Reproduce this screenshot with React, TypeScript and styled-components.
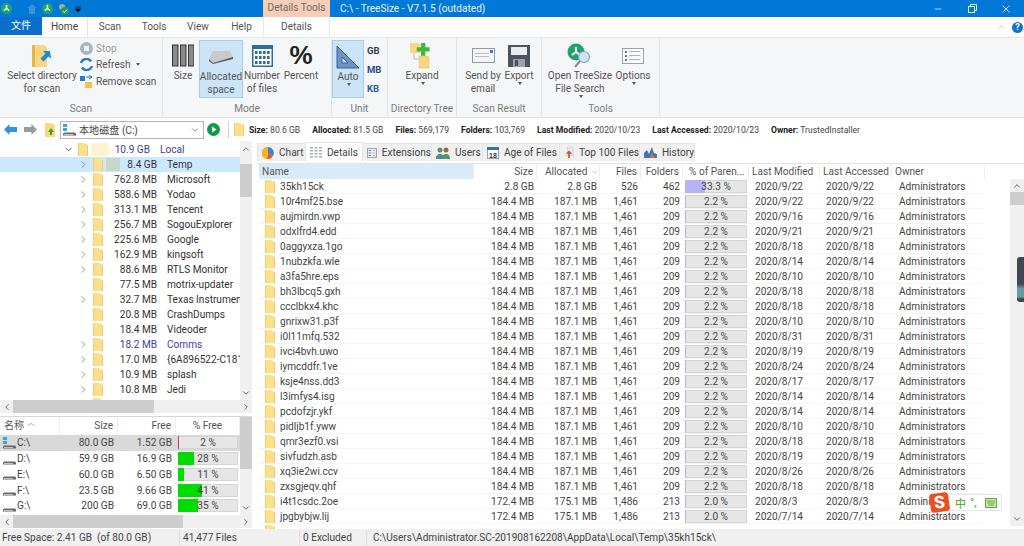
import React from 'react';
import styled, { createGlobalStyle } from 'styled-components';
import { ChevronDown, ChevronRight, ChevronLeft, ChevronUp, Minus, X } from 'lucide-react';

const Global = createGlobalStyle`
  html, body { margin: 0; padding: 0; height: 100%; overflow: hidden; background: #fff; }
  body { font-family: Roboto, "Noto Sans CJK SC", sans-serif; font-size: 10.1px; color: #2b2b2b; }
`;

const Win = styled.div`
  position: relative;
  width: 1024px;
  height: 546px;
  display: flex;
  flex-direction: column;
  overflow: hidden;
`;

/* title bar */
const TitleBar = styled.div`
  height: 17px;
  background: #0078d7;
  display: flex;
  align-items: center;
  color: #fff;
`;
const Qat = styled.div`
  width: 263px;
  display: flex;
  align-items: center;
  gap: 5px;
  padding-left: 1px;
  box-sizing: border-box;
`;
const ToolsTitle = styled.div`
  width: 67px;
  height: 17px;
  line-height: 16px;
  text-align: center;
  background: #f6cdb6;
  color: #6b6b6b;
`;
const TitleText = styled.div`
  margin-left: 10px;
  flex: 1;
  color: #e8f2fb;
`;
const WinButtons = styled.div`
  display: flex;
  align-items: center;
  padding-right: 1px;
  color: #d5e8f8;
`;
const WinBtn = styled.div`
  width: 34px;
  display: flex;
  justify-content: center;
`;

/* ribbon tabs */
const TabRow = styled.div`
  height: 20px;
  display: flex;
  background: #fff;
  align-items: flex-start;
`;
const FileTab = styled.div`
  width: 42px;
  height: 18px;
  background: #0a6fca;
  color: #fff;
  text-align: center;
  line-height: 17px;
`;
const RibbonTab = styled.div<{ $w: number; $active?: boolean; $ctx?: boolean }>`
  width: ${p => p.$w}px;
  height: 20px;
  text-align: center;
  line-height: 19px;
  color: #555;
  box-sizing: border-box;
  ${p => p.$active && 'color:#444; border-right:1px solid #e3e3e3;'}
  ${p => p.$ctx && 'border-left:1px solid #e6e6e6; border-right:1px solid #e6e6e6;'}
`;
const TabFill = styled.div`
  flex: 1;
  height: 20px;
  display: flex;
  justify-content: flex-end;
  align-items: center;
  gap: 6px;
  padding-right: 1px;
  color: #bbb;
`;
const HelpDot = styled.div`
  width: 11px;
  height: 11px;
  border-radius: 50%;
  background: #1173c9;
  color: #fff;
  font-size: 9px;
  font-weight: 700;
  line-height: 11px;
  text-align: center;
`;

/* ribbon */
const Ribbon = styled.div`
  height: 81px;
  background: #f5f6f7;
  border-top: 1px solid #e6e6e6;
  border-bottom: 1px solid #e2e2e2;
  box-sizing: border-box;
  display: flex;
`;
const Group = styled.div<{ $w: number }>`
  width: ${p => p.$w}px;
  border-right: 1px solid #e1e3e6;
  box-sizing: border-box;
  display: flex;
  flex-direction: column;
  padding-top: 2px;
`;
const GroupBody = styled.div<{ $pad?: number }>`
  flex: 1;
  display: flex;
  align-items: flex-start;
  padding-left: ${p => p.$pad || 0}px;
`;
const GroupLabel = styled.div`
  height: 16px;
  line-height: 15px;
  text-align: center;
  color: #7b7b7b;
  white-space: nowrap;
`;
const BigBtn = styled.div<{ $w: number; $on?: boolean }>`
  width: ${p => p.$w}px;
  height: 58px;
  box-sizing: border-box;
  display: flex;
  flex-direction: column;
  align-items: center;
  text-align: center;
  line-height: 13px;
  color: #555;
  white-space: nowrap;
  ${p => p.$on && 'background:#cce4f7; border:1px solid #a6cdea;'}
`;
const BigIcon = styled.div`
  height: 27px;
  margin-top: 2px;
  display: flex;
  align-items: center;
  justify-content: center;
`;
const PercentGlyph = styled.span`
  font-family: "Liberation Sans", sans-serif;
  font-size: 26px;
  font-weight: 700;
  color: #222;
`;
const SmallCol = styled.div`
  display: flex;
  flex-direction: column;
  gap: 2.5px;
  padding-top: 1px;
`;
const SmallBtn = styled.div<{ $off?: boolean }>`
  height: 14px;
  display: flex;
  align-items: center;
  gap: 3px;
  color: ${p => (p.$off ? '#9a9a9a' : '#555')};
  white-space: nowrap;
`;
const UnitCol = styled.div`
  display: flex;
  flex-direction: column;
  gap: 6px;
  padding: 4px 0 0 3px;
  font-weight: 700;
  font-size: 9.5px;
`;
const UnitLabel = styled.div<{ $c: string }>`
  height: 13px;
  line-height: 13px;
  color: ${p => p.$c};
`;
const Caret = styled.span`
  display: inline-block;
  border-left: 2.5px solid transparent;
  border-right: 2.5px solid transparent;
  border-top: 3px solid #555;
  vertical-align: middle;
  margin-left: 2px;
`;

/* info bar */
const InfoBar = styled.div`
  height: 23px;
  display: flex;
  align-items: center;
  background: #fff;
`;
const NavIcon = styled.div<{ $w: number }>`
  width: ${p => p.$w}px;
  display: flex;
  justify-content: center;
`;
const Combo = styled.div`
  width: 144px;
  height: 18px;
  box-sizing: border-box;
  border: 1px solid #b5b5b5;
  display: flex;
  align-items: center;
  gap: 3px;
  padding: 0 3px 0 2px;
  color: #444;
`;
const ComboText = styled.span`
  flex: 1;
`;
const Divider = styled.div`
  width: 1px;
  height: 17px;
  background: #ccc;
  margin: 0 5px 0 6px;
`;
const Facts = styled.div`
  display: flex;
  gap: 12px;
  margin-left: 5px;
  font-size: 8.6px;
  color: #444;
  white-space: nowrap;
`;
const Fact = styled.b`
  color: #222;
`;

/* main */
const Main = styled.div`
  height: 388px;
  display: flex;
`;
const LeftPane = styled.div`
  width: 252px;
  display: flex;
  flex-direction: column;
`;
const TreeArea = styled.div`
  height: 259px;
  display: flex;
`;
const TreeList = styled.div`
  flex: 1;
  padding-top: 1px;
  overflow: hidden;
  min-width: 0;
`;
const TreeRow = styled.div<{ $sel?: boolean; $indent: number }>`
  height: 15px;
  display: flex;
  align-items: center;
  padding-left: ${p => p.$indent}px;
  background: ${p => (p.$sel ? '#cce8ff' : 'transparent')};
  white-space: nowrap;
  overflow: hidden;
  & > * { flex: none; }
`;
const Twisty = styled.div`
  width: 12px;
  height: 11px;
  display: flex;
  justify-content: center;
  color: #888;
`;
const TreeIcon = styled.div`
  margin-left: 4px;
  display: flex;
`;
const SizeBox = styled.div<{ $w: number; $blue?: boolean }>`
  position: relative;
  width: ${p => p.$w}px;
  margin-left: 3px;
  text-align: right;
  color: ${p => (p.$blue ? '#3f3f9e' : '#333')};
`;
const SizeFill = styled.div<{ $w: number; $c: string }>`
  position: absolute;
  left: 0;
  top: -1px;
  bottom: -1px;
  width: ${p => p.$w}px;
  background: ${p => p.$c};
`;
const SizeText = styled.span`
  position: relative;
`;
const TreeName = styled.div<{ $blue?: boolean }>`
  margin-left: 10px;
  color: ${p => (p.$blue ? '#3f3f9e' : '#333')};
`;
const VBar = styled.div<{ $w?: number; $top?: number; $bottom?: number }>`
  width: ${p => p.$w || 12}px;
  margin-top: ${p => p.$top || 0}px;
  margin-bottom: ${p => p.$bottom || 0}px;
  background: #f0f0f0;
  display: flex;
  flex-direction: column;
  align-items: center;
  color: #555;
  flex: none;
`;
const VArrow = styled.div<{ $h?: number }>`
  height: ${p => p.$h || 15}px;
  flex: none;
  display: flex;
  align-items: center;
  justify-content: center;
`;
const VThumb = styled.div<{ $top: number; $h: number }>`
  width: 100%;
  flex: none;
  height: ${p => p.$h}px;
  margin-top: ${p => p.$top}px;
  background: #cdcdcd;
`;
const VSpace = styled.div`
  flex: 1;
`;
const HBar = styled.div`
  height: 13px;
  flex: none;
  background: #f0f0f0;
  display: flex;
  align-items: center;
  color: #555;
`;
const HArrow = styled.div`
  width: 13px;
  flex: none;
  display: flex;
  justify-content: center;
`;
const HThumb = styled.div<{ $w: number }>`
  width: ${p => p.$w}px;
  height: 100%;
  background: #cdcdcd;
`;
const DriveArea = styled.div`
  margin-top: 3px;
  border-top: 1px solid #d8d8d8;
  height: 98px;
  display: flex;
  flex: none;
`;
const DriveList = styled.div`
  flex: 1;
  overflow: hidden;
`;
const DriveHead = styled.div`
  height: 18px;
  display: grid;
  grid-template-columns: 60px 58px 58px 64px;
  align-items: center;
  color: #555;
`;
const DriveHeadCell = styled.div<{ $align?: string }>`
  height: 100%;
  line-height: 18px;
  padding: 0 4px;
  box-sizing: border-box;
  text-align: ${p => p.$align || 'left'};
  border-right: 1px solid #eee;
  position: relative;
`;
const SortTick = styled.span`
  position: absolute;
  left: 27px;
  top: -3px;
  color: #999;
  font-size: 8px;
`;
const DriveRow = styled.div<{ $sel?: boolean }>`
  height: 15.75px;
  display: grid;
  grid-template-columns: 60px 58px 58px 64px;
  align-items: center;
  background: ${p => (p.$sel ? '#d9d9d9' : 'transparent')};
  color: #444;
`;
const DriveName = styled.div`
  display: flex;
  align-items: center;
  gap: 1px;
  padding-left: 3px;
`;
const DriveNum = styled.div`
  text-align: right;
  padding-right: 4px;
`;
const Bar = styled.div`
  position: relative;
  height: 13px;
  margin: 0 2px;
  box-sizing: border-box;
  background: #e6e6e6;
  border: 1px solid #d4d4d4;
  text-align: center;
  line-height: 11px;
  color: #444;
`;
const BarFill = styled.div<{ $c: string }>`
  position: absolute;
  left: -1px;
  top: -1px;
  bottom: -1px;
  background: ${p => p.$c};
`;
const BarText = styled.span`
  position: relative;
`;

const Splitter = styled.div`
  width: 5px;
  flex: none;
`;

/* right */
const RightPane = styled.div`
  flex: 1;
  display: flex;
  flex-direction: column;
  min-width: 0;
`;
const DetailTabs = styled.div`
  height: 22px;
  padding-top: 2px;
  box-sizing: border-box;
  display: flex;
  align-items: flex-start;
`;
const DetailTab = styled.div<{ $w: number; $active?: boolean }>`
  width: ${p => p.$w}px;
  height: ${p => (p.$active ? 20 : 18)}px;
  box-sizing: border-box;
  display: flex;
  align-items: center;
  gap: 5px;
  padding-left: 4px;
  white-space: nowrap;
  color: #444;
  background: ${p => (p.$active ? '#fff' : '#f0f0f0')};
  border: 1px solid #e4e4e4;
  border-bottom: none;
  margin-right: -1px;
  ${p => p.$active && 'position:relative; top:-1px;'}
`;
const TableWrap = styled.div`
  flex: 1;
  display: flex;
  border-top: 1px solid #e4e4e4;
  min-height: 0;
`;
const Table = styled.div`
  flex: 1;
  padding-left: 2px;
  overflow: hidden;
  min-width: 0;
`;
const COLS = '215px 63px 63px 41px 42px 66px 71px 72px 93px';
const HeadRow = styled.div`
  height: 15px;
  display: grid;
  grid-template-columns: ${COLS};
  color: #555;
`;
const HeadCell = styled.div<{ $align?: string; $hi?: boolean; $pad?: number }>`
  display: block;
  line-height: 15px;
  padding: 0 3px 0 ${p => p.$pad || 3}px;
  box-sizing: border-box;
  white-space: nowrap;
  overflow: hidden;
  text-align: ${p => p.$align || 'left'};
  background: ${p => (p.$hi ? '#d9ebf9' : 'transparent')};
  border-right: 1px solid #eee;
`;
const SortChevron = styled(ChevronDown)`
  width: 8px;
  height: 8px;
  color: #aaa;
  margin-left: 4px;
  vertical-align: -1px;
`;
const DataRow = styled.div`
  height: 15px;
  display: grid;
  grid-template-columns: ${COLS};
  align-items: center;
  box-shadow: inset 0 -1px 0 #f4f4f4;
  width: 726px;
  color: #444;
`;
const NameCell = styled.div`
  display: flex;
  align-items: center;
  gap: 5px;
  padding-left: 6px;
`;
const NumCell = styled.div`
  text-align: right;
  padding-right: 3px;
`;
const DateCell = styled.div`
  padding-left: 6px;
  white-space: nowrap;
`;
const OwnerCell = styled.div`
  padding-left: 7px;
`;

/* status */
const StatusBar = styled.div`
  flex: 1;
  background: #f0f0f0;
  display: flex;
  align-items: center;
  color: #444;
  white-space: nowrap;
`;
const StatusCell = styled.div<{ $w: number; $pad: number; $last?: boolean }>`
  width: ${p => p.$w}px;
  flex: none;
  box-sizing: border-box;
  padding-left: ${p => p.$pad}px;
  border-right: ${p => (p.$last ? 'none' : '1px solid #dcdcdc')};
  line-height: 15px;
`;

/* overlays */
const SideHandle = styled.div`
  position: absolute;
  left: 1017px;
  top: 257px;
  width: 7px;
  height: 45px;
  border-radius: 3px 0 0 3px;
  background: linear-gradient(#3f4654 0 60%, #5f9f9a 70% 88%, #3f4654 94%);
`;
const Ime = styled.div`
  position: absolute;
  left: 930px;
  top: 493px;
  width: 72px;
  height: 19px;
  display: flex;
  align-items: center;
`;
const ImeBody = styled.div`
  margin-left: 16px;
  flex: 1;
  height: 17px;
  background: #fff;
  border: 1px solid #e5e5e5;
  box-sizing: border-box;
  display: flex;
  align-items: center;
  padding-left: 8px;
  color: #62a83a;
  font-weight: 500;
  font-size: 11px;
`;
const ImeDots = styled.span`
  margin-left: 4px;
  width: 15px;
`;
const ImeLogo = styled.div`
  position: absolute;
  left: 0;
  top: 0;
  width: 19px;
  height: 19px;
  border-radius: 3px;
  background: #e8501f;
  color: #fff;
  font-weight: 900;
  font-size: 17px;
  line-height: 18px;
  text-align: center;
  transform: rotate(-8deg);
`;

/* drawings */
const Folder = ({ w = 10, h = 13 }: { w?: number; h?: number }) => (
  <svg width={w} height={h} viewBox="0 0 10 13" style={{ flex: 'none' }}>
    <path d="M0 0h6l4 2v11H0z" fill="#fbdf8c" />
    <path d="M0 0h1v13H0z" fill="#f0cc6c" />
    <path d="M9 2l1 0v11H9z" fill="#f4ca68" />
  </svg>
);
const Drive = ({ win }: { win?: boolean }) => (
  <svg width="13" height="12" viewBox="0 0 13 12" style={{ flex: 'none' }}>
    {win && <path d="M0 0h4v3H0zM0 4h4v3H0z" fill="#3aa0e0" />}
    <path d="M1 8.5h11l1 1v2H0v-2z" fill="#666" />
    <path d="M1 10h9v.8H1z" fill="#ddd" />
  </svg>
);
const BigFolderIcon = () => (
  <svg width="22" height="26" viewBox="0 0 22 26">
    <path d="M1 2h12l3 2v20H1z" fill="#f7d581" />
    <path d="M1 2h3v22H1z" fill="#e5b54c" />
    <path d="M15 6h-7l2.5 2.5-5 5 3 3 5-5L16 14z" fill="#1c8ad6" transform="translate(4 2)" />
  </svg>
);
const ColumnsIcon = () => (
  <svg width="22" height="24" viewBox="0 0 22 24">
    {[0, 8, 16].map(x => (
      <rect key={x} x={x + 0.5} y="1" width="5.5" height="21" fill="#8b8b8b" stroke="#333" strokeWidth="1" />
    ))}
  </svg>
);
const DiskIcon = () => (
  <svg width="24" height="14" viewBox="0 0 24 14">
    <path d="M4 1h17l3 6-20 6-4-4z" fill="#c9c9c9" />
    <path d="M0 9l4 4 20-6v2L4 14 0 11z" fill="#555" />
  </svg>
);
const GridIcon = () => (
  <svg width="21" height="22" viewBox="0 0 21 22">
    <rect width="21" height="22" fill="#2d6da3" />
    <rect x="1.5" y="4" width="18" height="16.5" fill="#fff" />
    {[0, 1, 2].map(r =>
      [0, 1, 2, 3].map(c => <rect key={`${r}${c}`} x={3 + c * 4} y={6 + r * 5} width="2.6" height="3" fill="#2d6da3" />)
    )}
  </svg>
);
const TriangleIcon = () => (
  <svg width="24" height="24" viewBox="0 0 24 24">
    <path d="M1 1l22 22H1z" fill="#6e94c6" stroke="#3b5f91" />
    <path d="M6 12l6 6H6z" fill="#cfe0f3" stroke="#3b5f91" />
  </svg>
);
const ExpandIcon = () => (
  <svg width="24" height="27" viewBox="0 0 24 27">
    <path d="M0 1h8l2 1v9H0z" fill="#f7d581" />
    <path d="M9 14h8l2 1v11H9z" fill="#f7d581" stroke="#e8bf63" strokeWidth=".5" />
    <path d="M4 11v6h5" fill="none" stroke="#bbb" />
    <path d="M13 0h5v5h5v5h-5v5h-5v-5H8V5h5z" fill="#41b73c" transform="translate(0 1) scale(.85)" />
  </svg>
);
const MailIcon = () => (
  <svg width="23" height="15" viewBox="0 0 23 15">
    <rect x=".5" y=".5" width="22" height="14" fill="#f4f6f8" stroke="#8d99a6" />
    <rect x="3" y="5" width="14" height="1" fill="#b5bec8" />
    <rect x="3" y="8" width="14" height="1" fill="#b5bec8" />
    <rect x="18" y="2" width="3" height="3" fill="#3f79b8" />
  </svg>
);
const SaveIcon = () => (
  <svg width="22" height="22" viewBox="0 0 22 22">
    <path d="M0 0h22v22H0z" fill="#4b5560" />
    <rect x="3" y="2" width="16" height="8" fill="#e9ecef" />
    <rect x="5" y="14" width="12" height="8" fill="#9aa3ab" />
    <rect x="7" y="15" width="3" height="6" fill="#4b5560" />
  </svg>
);
const TreeLogo = ({ s = 14 }: { s?: number }) => (
  <svg width={s} height={s} viewBox="0 0 16 16" style={{ flex: 'none' }}>
    <circle cx="8" cy="8" r="8" fill="#20a46a" />
    <path d="M8 8V3M8 8l-4 3M8 8l4 3" stroke="#fff" strokeWidth="2" />
  </svg>
);
const SearchLogo = () => (
  <svg width="26" height="25" viewBox="0 0 26 25">
    <circle cx="9" cy="9" r="8.5" fill="#20a46a" />
    <path d="M9 9V4M9 9l-4 3M9 9l4 3" stroke="#fff" strokeWidth="2" />
    <circle cx="17" cy="14" r="5.5" fill="#cfe3f3" stroke="#8aa9c2" strokeWidth="1.2" />
    <path d="M13 18l-5 6" stroke="#8b8b8b" strokeWidth="2" />
  </svg>
);
const OptionsIcon = () => (
  <svg width="22" height="16" viewBox="0 0 22 16">
    <rect x=".5" y=".5" width="21" height="15" fill="#f8f9fa" stroke="#9aa3ad" />
    {[3, 7, 11].map(y => (
      <g key={y}>
        <rect x="3" y={y} width="2" height="2" fill="#5b7fa8" />
        <rect x="7" y={y} width="11" height="1" fill="#aab2ba" />
      </g>
    ))}
  </svg>
);
const StopIcon = () => (
  <svg width="13" height="13" viewBox="0 0 13 13">
    <circle cx="6.5" cy="6.5" r="6.5" fill="#a9b6c6" />
    <rect x="4" y="4" width="5" height="5" fill="#eef1f5" />
  </svg>
);
const RefreshIcon = () => (
  <svg width="13" height="13" viewBox="0 0 13 13">
    <path d="M1 5a5.5 5.5 0 0 1 10-1.5" fill="none" stroke="#2a79c4" strokeWidth="2.4" />
    <path d="M12 8a5.5 5.5 0 0 1-10 1.5" fill="none" stroke="#2a79c4" strokeWidth="2.4" />
  </svg>
);
const RemoveIcon = () => (
  <svg width="13" height="13" viewBox="0 0 13 13">
    <path d="M0 1h5v5H0z" fill="#2a79c4" />
    <path d="M5 7h7v6H5z" fill="#f2c14e" />
    <path d="M6 2h6M9 0l3 2-3 2" stroke="#2a79c4" fill="none" />
  </svg>
);
const Arrow = ({ c, flip }: { c: string; flip?: boolean }) => (
  <svg width="13" height="11" viewBox="0 0 13 11" style={flip ? { transform: 'scaleX(-1)' } : undefined}>
    <path d="M0 5.5L5.5 0v3H13v5H5.5v3z" fill={c} />
  </svg>
);
const UpFolder = () => (
  <svg width="10" height="14" viewBox="0 0 10 14">
    <path d="M0 0h6l4 2v12H0z" fill="#f9d97f" />
    <path d="M6 5l3 4H7v3H5V9H3z" fill="#3da32f" />
  </svg>
);
const PlayBtn = () => (
  <svg width="13" height="13" viewBox="0 0 13 13">
    <circle cx="6.5" cy="6.5" r="6.5" fill="#109a4c" />
    <path d="M5 3.5l4.5 3-4.5 3z" fill="#fff" />
  </svg>
);
const RestoreIcon = () => (
  <svg width="9" height="9" viewBox="0 0 9 9" fill="none" stroke="#e6f1fb">
    <rect x=".5" y="2.5" width="6" height="6" />
    <path d="M2.5 2.5v-2h6v6h-2" />
  </svg>
);
const TabGlyph = ({ kind }: { kind: string }) => {
  if (kind === 'chart')
    return (
      <svg width="12" height="12" viewBox="0 0 12 12">
        <path d="M6 6V0a6 6 0 0 1 5 9z" fill="#3d7fd0" />
        <path d="M6 6l5 3a6 6 0 0 1-6 3z" fill="#e0572a" />
        <path d="M6 6l-1 6a6 6 0 0 1 1-12z" fill="#f1b32a" />
      </svg>
    );
  if (kind === 'details')
    return (
      <svg width="12" height="11" viewBox="0 0 12 11" fill="#a9b2ba">
        {[1, 4, 7, 10].map(y => (
          <g key={y}>
            <rect x="0" y={y - 1} width="3" height="1.5" />
            <rect x="4.5" y={y - 1} width="3" height="1.5" />
            <rect x="9" y={y - 1} width="3" height="1.5" />
          </g>
        ))}
      </svg>
    );
  if (kind === 'ext')
    return (
      <svg width="12" height="12" viewBox="0 0 12 12">
        <rect x=".5" y=".5" width="11" height="11" fill="#eef0f2" stroke="#8a949e" />
        <path d="M2 3h3M2 6h3M2 9h3" stroke="#3f6f9e" />
        <path d="M7 3h3M7 6h3M7 9h3" stroke="#9aa3ab" />
      </svg>
    );
  if (kind === 'users')
    return (
      <svg width="14" height="12" viewBox="0 0 14 12">
        <circle cx="4" cy="3" r="2.5" fill="#5f8f5a" />
        <path d="M0 12c0-4 2-5 4-5s4 1 4 5z" fill="#4c8a9c" />
        <circle cx="10" cy="3" r="2.5" fill="#8a6f4e" />
        <path d="M6 12c0-4 2-5 4-5s4 1 4 5z" fill="#5a9070" />
      </svg>
    );
  if (kind === 'age')
    return (
      <svg width="12" height="12" viewBox="0 0 12 12">
        <rect x=".5" y=".5" width="11" height="11" fill="#fff" stroke="#9aa3ab" />
        <rect x="0" y="0" width="12" height="3" fill="#2f73b5" />
        <text x="6" y="10.5" fontSize="7" fontWeight="700" textAnchor="middle" fill="#333" fontFamily="Liberation Sans">18</text>
      </svg>
    );
  if (kind === 'top')
    return (
      <svg width="12" height="13" viewBox="0 0 12 13">
        <path d="M4 0h7v10H4z" fill="#e6e9ec" stroke="#b5bcc3" strokeWidth=".5" />
        <path d="M5 13V8H2l4-4 4 4H7v5z" fill="#d9502e" />
      </svg>
    );
  return (
    <svg width="13" height="11" viewBox="0 0 13 11">
      <path d="M0 11V6l3-3 2 4 3-7 2 6 3 1v4z" fill="#3a76b8" />
      <path d="M6 11l2-6 3 6z" fill="#d9702e" />
    </svg>
  );
};

const tree: [string, string, boolean][] = [
  ['8.4 GB', 'Temp', true],
  ['762.8 MB', 'Microsoft', true],
  ['588.6 MB', 'Yodao', true],
  ['313.1 MB', 'Tencent', true],
  ['256.7 MB', 'SogouExplorer', true],
  ['225.6 MB', 'Google', true],
  ['162.9 MB', 'kingsoft', true],
  ['88.6 MB', 'RTLS Monitor', true],
  ['77.5 MB', 'motrix-updater', false],
  ['32.7 MB', 'Texas Instruments', true],
  ['20.8 MB', 'CrashDumps', false],
  ['18.4 MB', 'Videoder', false],
  ['18.2 MB', 'Comms', true],
  ['17.0 MB', '{6A896522-C181-4', true],
  ['10.9 MB', 'splash', true],
  ['10.8 MB', 'Jedi', true],
];

const drives = [
  { n: 'C:\\', s: '80.0 GB', f: '1.52 GB', p: 2, c: '#d0404a', w: true },
  { n: 'D:\\', s: '59.9 GB', f: '16.9 GB', p: 28, c: '#00dc00' },
  { n: 'E:\\', s: '60.0 GB', f: '6.50 GB', p: 11, c: '#00dc00' },
  { n: 'F:\\', s: '23.5 GB', f: '9.66 GB', p: 41, c: '#00dc00' },
  { n: 'G:\\', s: '200 GB', f: '69.0 GB', p: 35, c: '#00dc00' },
];

const files: [string, string][] = [
  ['10r4mf25.bse', '9/22'],
  ['aujmirdn.vwp', '9/16'],
  ['odxlfrd4.edd', '9/21'],
  ['0aggyxza.1go', '8/18'],
  ['1nubzkfa.wle', '8/14'],
  ['a3fa5hre.eps', '8/10'],
  ['bh3lbcq5.gxh', '8/18'],
  ['ccclbkx4.khc', '8/18'],
  ['gnrixw31.p3f', '8/10'],
  ['i0l11mfq.532', '8/31'],
  ['ivci4bvh.uwo', '8/19'],
  ['iymcddfr.1ve', '8/24'],
  ['ksje4nss.dd3', '8/17'],
  ['l3imfys4.isg', '8/14'],
  ['pcdofzjr.ykf', '8/14'],
  ['pidljb1f.yww', '8/10'],
  ['qmr3ezf0.vsi', '8/18'],
  ['sivfudzh.asb', '8/19'],
  ['xq3ie2wi.ccv', '8/26'],
  ['zxsgjeqv.qhf', '8/18'],
];

type FileRow = { name: string; size: string; alloc: string; cnt: string; dirs: string; pct: number; pctText: string; date: string };
const rows: FileRow[] = [
  { name: '35kh15ck', size: '2.8 GB', alloc: '2.8 GB', cnt: '526', dirs: '462', pct: 33.3, pctText: '33.3 %', date: '2020/9/22' },
  ...files.map(([name, d]) => ({ name, size: '184.4 MB', alloc: '187.1 MB', cnt: '1,461', dirs: '209', pct: 2.2, pctText: '2.2 %', date: '2020/' + d })),
  { name: 'i4t1csdc.2oe', size: '172.4 MB', alloc: '175.1 MB', cnt: '1,486', dirs: '213', pct: 2, pctText: '2.0 %', date: '2020/8/3' },
  { name: 'jpgbybjw.lij', size: '172.4 MB', alloc: '175.1 MB', cnt: '1,486', dirs: '213', pct: 2, pctText: '2.0 %', date: '2020/7/14' },
];

export default function App() {
  return (
    <Win>
      <Global />
      <TitleBar>
        <Qat>
          <TreeLogo s={11} />
          <svg width="10" height="10" viewBox="0 0 10 10" style={{ marginLeft: 10 }}><path d="M2 10V4H0l5-4 5 4H8v6z" fill="#3f8fd8" /></svg>
          <TreeLogo s={11} />
          <svg width="12" height="12" viewBox="0 0 12 12"><circle cx="4" cy="4" r="3" fill="#a8a8a8" /><circle cx="7" cy="8" r="4" fill="#1d9a4a" /><path d="M5 8l1.5 1.5L9 6.5" stroke="#fff" fill="none" /></svg>
          <svg width="6" height="6" viewBox="0 0 6 6"><path d="M0 1h6M0 3h6L3 6z" stroke="#111" strokeWidth=".7" fill="#111" /></svg>
        </Qat>
        <ToolsTitle>Details Tools</ToolsTitle>
        <TitleText>C:\ - TreeSize - V7.1.5 (outdated)</TitleText>
        <WinButtons>
          <WinBtn><Minus size={10} /></WinBtn>
          <WinBtn><RestoreIcon /></WinBtn>
          <WinBtn><X size={12} /></WinBtn>
        </WinButtons>
      </TitleBar>

      <TabRow>
        <FileTab>文件</FileTab>
        <RibbonTab $w={46} $active>Home</RibbonTab>
        <RibbonTab $w={44}>Scan</RibbonTab>
        <RibbonTab $w={44}>Tools</RibbonTab>
        <RibbonTab $w={44}>View</RibbonTab>
        <RibbonTab $w={43}>Help</RibbonTab>
        <RibbonTab $w={67} $ctx>Details</RibbonTab>
        <TabFill>
          <ChevronUp size={10} />
          <HelpDot>?</HelpDot>
        </TabFill>
      </TabRow>

      <Ribbon>
        <Group $w={163}>
          <GroupBody $pad={4}>
            <BigBtn $w={76}>
              <BigIcon><BigFolderIcon /></BigIcon>
              Select directory<br />for scan
            </BigBtn>
            <SmallCol>
              <SmallBtn $off><StopIcon />Stop</SmallBtn>
              <SmallBtn><RefreshIcon />Refresh<Caret /></SmallBtn>
              <SmallBtn><RemoveIcon />Remove scan</SmallBtn>
            </SmallCol>
          </GroupBody>
          <GroupLabel>Scan</GroupLabel>
        </Group>
        <Group $w={169}>
          <GroupBody $pad={4}>
            <BigBtn $w={32}>
              <BigIcon><ColumnsIcon /></BigIcon>
              Size
            </BigBtn>
            <BigBtn $w={44} $on>
              <BigIcon><DiskIcon /></BigIcon>
              Allocated<br />space
            </BigBtn>
            <BigBtn $w={38}>
              <BigIcon><GridIcon /></BigIcon>
              Number<br />of files
            </BigBtn>
            <BigBtn $w={40}>
              <BigIcon><PercentGlyph>%</PercentGlyph></BigIcon>
              Percent
            </BigBtn>
          </GroupBody>
          <GroupLabel>Mode</GroupLabel>
        </Group>
        <Group $w={56}>
          <GroupBody>
            <BigBtn $w={32} $on>
              <BigIcon><TriangleIcon /></BigIcon>
              Auto<br /><Caret />
            </BigBtn>
            <UnitCol>
              <UnitLabel $c="#2a3f55">GB</UnitLabel>
              <UnitLabel $c="#2a4a80">MB</UnitLabel>
              <UnitLabel $c="#2b5f9c">KB</UnitLabel>
            </UnitCol>
          </GroupBody>
          <GroupLabel>Unit</GroupLabel>
        </Group>
        <Group $w={69}>
          <GroupBody>
            <BigBtn $w={68}>
              <BigIcon><ExpandIcon /></BigIcon>
              Expand<br /><Caret />
            </BigBtn>
          </GroupBody>
          <GroupLabel>Directory Tree</GroupLabel>
        </Group>
        <Group $w={85}>
          <GroupBody $pad={6}>
            <BigBtn $w={40}>
              <BigIcon><MailIcon /></BigIcon>
              Send by<br />email
            </BigBtn>
            <BigBtn $w={32}>
              <BigIcon><SaveIcon /></BigIcon>
              Export<br /><Caret />
            </BigBtn>
          </GroupBody>
          <GroupLabel>Scan Result</GroupLabel>
        </Group>
        <Group $w={118}>
          <GroupBody $pad={4}>
            <BigBtn $w={68}>
              <BigIcon><SearchLogo /></BigIcon>
              Open TreeSize<br />File Search<Caret />
            </BigBtn>
            <BigBtn $w={38}>
              <BigIcon><OptionsIcon /></BigIcon>
              Options<br /><Caret />
            </BigBtn>
          </GroupBody>
          <GroupLabel>Tools</GroupLabel>
        </Group>
      </Ribbon>

      <InfoBar>
        <NavIcon $w={21}><Arrow c="#2f93dd" /></NavIcon>
        <NavIcon $w={19}><Arrow c="#9a9a9a" flip /></NavIcon>
        <NavIcon $w={20}><UpFolder /></NavIcon>
        <Combo>
          <Drive win />
          <ComboText>本地磁盘 (C:)</ComboText>
          <ChevronDown size={10} color="#666" />
        </Combo>
        <NavIcon $w={18}><PlayBtn /></NavIcon>
        <Divider />
        <Folder />
        <Facts>
          <span><Fact>Size:</Fact> 80.6 GB</span>
          <span><Fact>Allocated:</Fact> 81.5 GB</span>
          <span><Fact>Files:</Fact> 569,179</span>
          <span><Fact>Folders:</Fact> 103,769</span>
          <span><Fact>Last Modified:</Fact> 2020/10/23</span>
          <span><Fact>Last Accessed:</Fact> 2020/10/23</span>
          <span><Fact>Owner:</Fact> TrustedInstaller</span>
        </Facts>
      </InfoBar>

      <Main>
        <LeftPane>
          <TreeArea>
            <TreeList>
              <TreeRow $indent={62}>
                <Twisty><ChevronDown size={11} color="#555" /></Twisty>
                <TreeIcon><Folder /></TreeIcon>
                <SizeBox $w={59} $blue>
                  <SizeFill $w={18} $c="#fdf3cf" />
                  <SizeText>10.9 GB</SizeText>
                </SizeBox>
                <TreeName $blue>Local</TreeName>
              </TreeRow>
              {tree.map(([s, n, more], i) => (
                <TreeRow key={n} $indent={77} $sel={i === 0}>
                  <Twisty>{more && <ChevronRight size={11} />}</Twisty>
                  <TreeIcon><Folder /></TreeIcon>
                  <SizeBox $w={51} $blue={n === 'Comms'}>
                    {i === 0 && <SizeFill $w={14} $c="#c5d8c6" />}
                    <SizeText>{s}</SizeText>
                  </SizeBox>
                  <TreeName $blue={n === 'Comms'}>{n}</TreeName>
                </TreeRow>
              ))}
              <TreeRow $indent={77}>
                <Twisty />
                <TreeIcon><Folder /></TreeIcon>
              </TreeRow>
            </TreeList>
            <VBar>
              <VArrow><ChevronUp size={10} /></VArrow>
              <VThumb $top={8} $h={33} />
              <VSpace />
              <VArrow><ChevronDown size={10} /></VArrow>
            </VBar>
          </TreeArea>
          <HBar>
            <HArrow><ChevronLeft size={10} /></HArrow>
            <HThumb $w={141} />
            <VSpace />
            <HArrow><ChevronRight size={10} /></HArrow>
          </HBar>
          <DriveArea>
            <DriveList>
              <DriveHead>
                <DriveHeadCell>名称<SortTick>︿</SortTick></DriveHeadCell>
                <DriveHeadCell $align="right">Size</DriveHeadCell>
                <DriveHeadCell $align="right">Free</DriveHeadCell>
                <DriveHeadCell $align="center">% Free</DriveHeadCell>
              </DriveHead>
              {drives.map(d => (
                <DriveRow key={d.n} $sel={d.w}>
                  <DriveName><Drive win={d.w} />{d.n}</DriveName>
                  <DriveNum>{d.s}</DriveNum>
                  <DriveNum>{d.f}</DriveNum>
                  <Bar>
                    <BarFill $c={d.c} style={{ width: `${d.p}%` }} />
                    <BarText>{d.p} %</BarText>
                  </Bar>
                </DriveRow>
              ))}
            </DriveList>
            <VBar>
              <VThumb $top={0} $h={52} />
              <VSpace />
              <VArrow><ChevronDown size={10} /></VArrow>
            </VBar>
          </DriveArea>
          <HBar>
            <HArrow><ChevronLeft size={10} /></HArrow>
            <HThumb $w={170} />
            <VSpace />
            <HArrow><ChevronRight size={10} /></HArrow>
          </HBar>
        </LeftPane>
        <Splitter />
        <RightPane>
          <DetailTabs>
            <DetailTab $w={49}><TabGlyph kind="chart" />Chart</DetailTab>
            <DetailTab $w={58} $active><TabGlyph kind="details" />Details</DetailTab>
            <DetailTab $w={70}><TabGlyph kind="ext" />Extensions</DetailTab>
            <DetailTab $w={52}><TabGlyph kind="users" />Users</DetailTab>
            <DetailTab $w={78}><TabGlyph kind="age" />Age of Files</DetailTab>
            <DetailTab $w={81}><TabGlyph kind="top" />Top 100 Files</DetailTab>
            <DetailTab $w={56}><TabGlyph kind="history" />History</DetailTab>
          </DetailTabs>
          <TableWrap>
            <Table>
              <HeadRow>
                <HeadCell $hi>Name</HeadCell>
                <HeadCell $align="right">Size</HeadCell>
                <HeadCell $pad={8}>Allocated<SortChevron /></HeadCell>
                <HeadCell $align="right">Files</HeadCell>
                <HeadCell $align="right">Folders</HeadCell>
                <HeadCell $pad={6}>% of Paren...</HeadCell>
                <HeadCell>Last Modified</HeadCell>
                <HeadCell>Last Accessed</HeadCell>
                <HeadCell>Owner</HeadCell>
              </HeadRow>
              {rows.map(r => (
                <DataRow key={r.name}>
                  <NameCell><Folder />{r.name}</NameCell>
                  <NumCell>{r.size}</NumCell>
                  <NumCell>{r.alloc}</NumCell>
                  <NumCell>{r.cnt}</NumCell>
                  <NumCell>{r.dirs}</NumCell>
                  <Bar>
                    <BarFill $c="#b3b3f5" style={{ width: `${r.pct}%` }} />
                    <BarText>{r.pctText}</BarText>
                  </Bar>
                  <DateCell>{r.date}</DateCell>
                  <DateCell>{r.date}</DateCell>
                  <OwnerCell>Administrators</OwnerCell>
                </DataRow>
              ))}
              <DataRow>
                <NameCell><Folder /></NameCell>
              </DataRow>
            </Table>
            <VBar $w={14} $top={15} $bottom={3}>
              <VArrow $h={13}><ChevronUp size={10} /></VArrow>
              <VThumb $top={0} $h={13} />
              <VSpace />
              <VArrow><ChevronDown size={10} /></VArrow>
            </VBar>
          </TableWrap>
        </RightPane>
      </Main>

      <StatusBar>
        <StatusCell $w={180} $pad={2}>Free Space: 2.41 GB&nbsp; (of 80.0 GB)</StatusCell>
        <StatusCell $w={120} $pad={3}>41,477 Files</StatusCell>
        <StatusCell $w={67} $pad={3}>0 Excluded</StatusCell>
        <StatusCell $w={400} $pad={6} $last>C:\Users\Administrator.SC-201908162208\AppData\Local\Temp\35kh15ck\</StatusCell>
      </StatusBar>

      <SideHandle />
      <Ime>
        <ImeLogo>S</ImeLogo>
        <ImeBody>
          中
          <ImeDots>°,</ImeDots>
          <svg width="12" height="10" viewBox="0 0 12 10"><rect x=".5" y=".5" width="11" height="9" fill="#cde8b5" stroke="#62a83a" /><path d="M2 3h8M2 5h8M3 7h6" stroke="#62a83a" /></svg>
        </ImeBody>
      </Ime>
    </Win>
  );
}
